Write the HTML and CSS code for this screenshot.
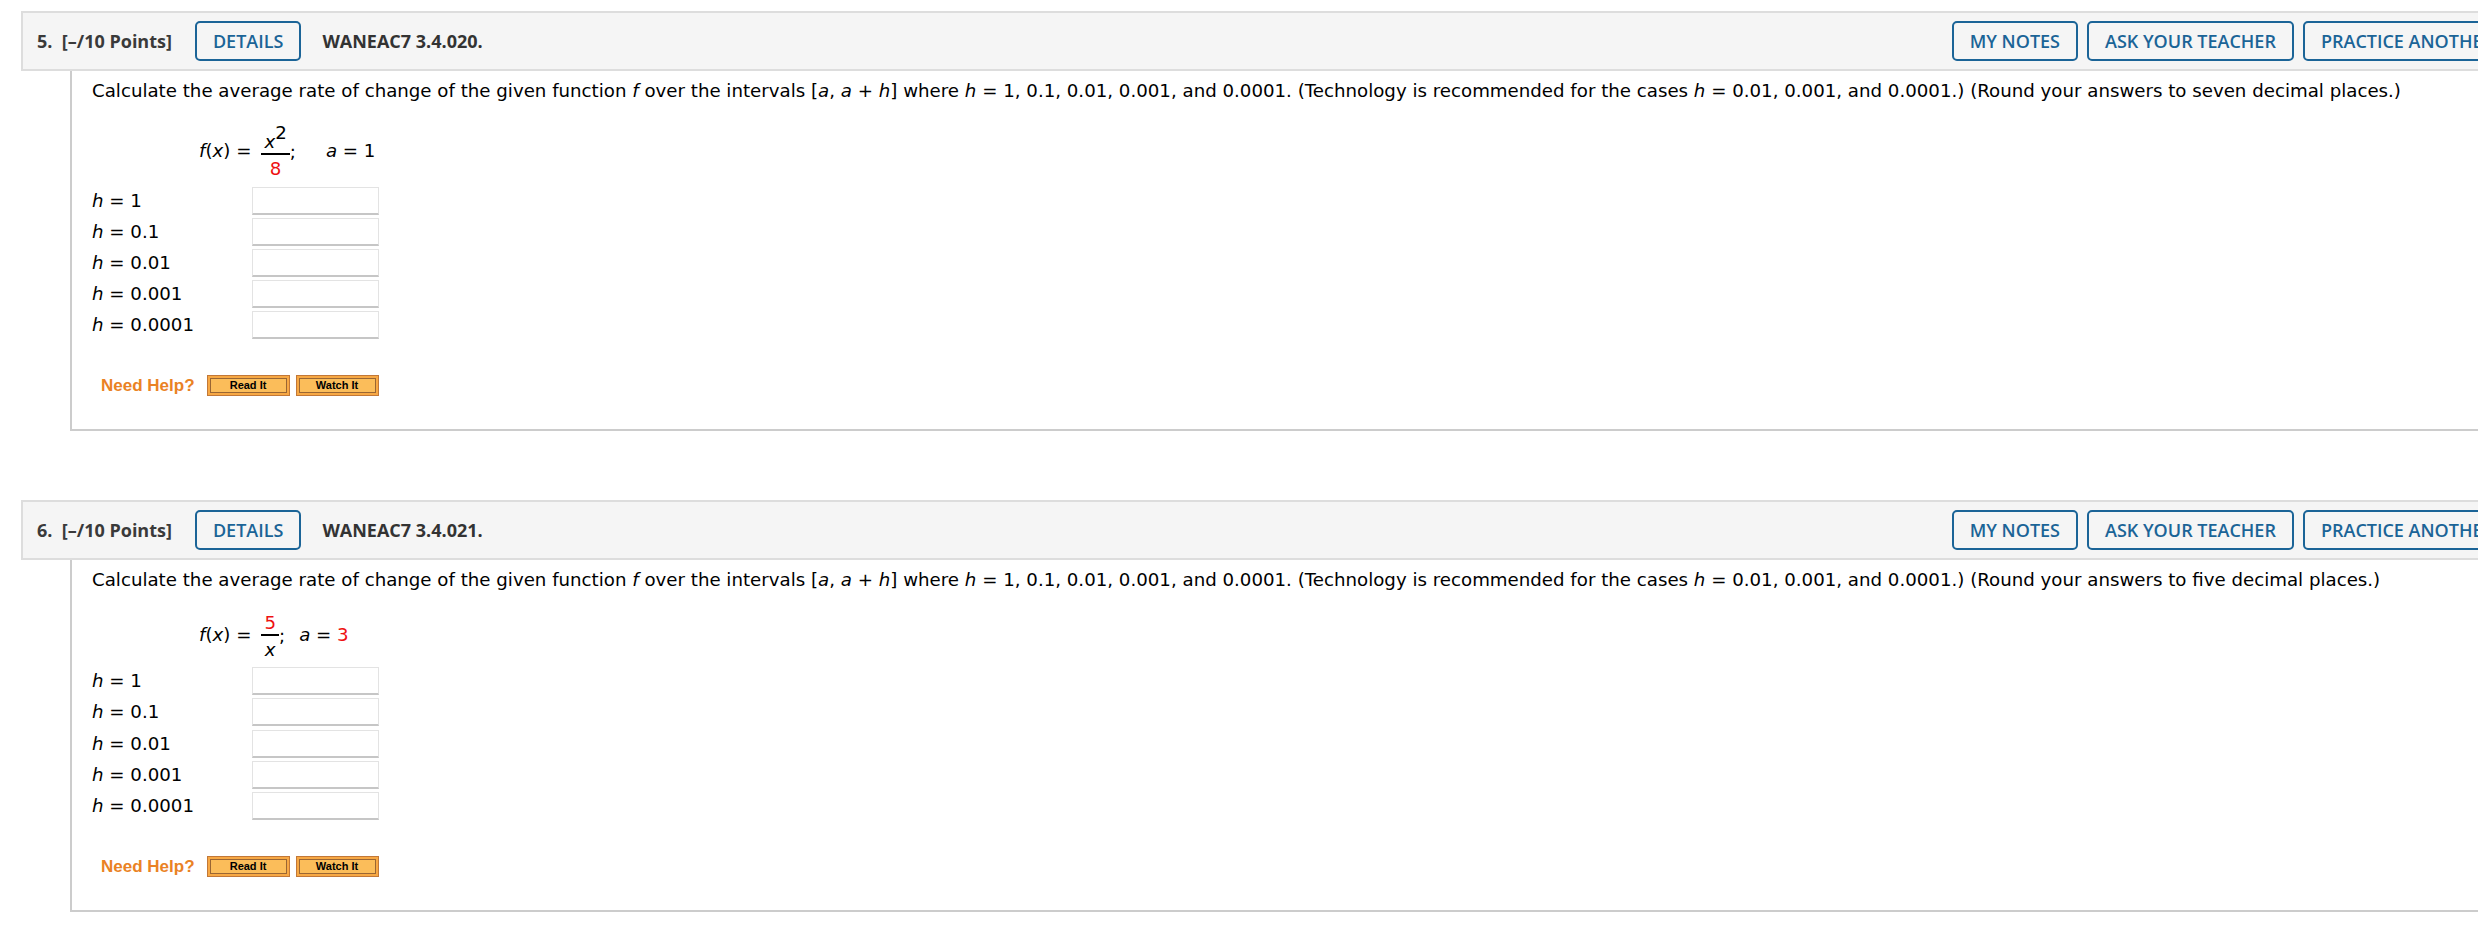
FILE: index.html
```html
<!DOCTYPE html>
<html lang="en">
<head>
<meta charset="utf-8">
<title>WebAssign</title>
<link rel="stylesheet" href="styles.css">
</head>
<body>
<div class="page">
  <section class="question">
    <div class="qhead">
      <span class="qnum">5.&nbsp; [–/10 Points]</span>
      <button class="btn details">DETAILS</button>
      <span class="qid">WANEAC7 3.4.020.</span>
      <div class="tools">
        <button class="btn">MY NOTES</button>
        <button class="btn">ASK YOUR TEACHER</button>
        <button class="btn">PRACTICE ANOTHER</button>
      </div>
    </div>
    <div class="qbody">
      <p class="prompt">Calculate the average rate of change of the given function <i>f</i> over the intervals [<i>a</i>, <i>a</i> + <i>h</i>] where <i>h</i> = 1, 0.1, 0.01, 0.001, and 0.0001. (Technology is recommended for the cases <i>h</i> = 0.01, 0.001, and 0.0001.) (Round your answers to seven decimal places.)</p>
      <div class="formula">
        <span class="fx"><i>f</i>(<i>x</i>) =</span>
        <span class="frac"><span class="num tall"><i>x</i><sup>2</sup></span><span class="den red">8</span></span>
        <span class="semi">;</span>
        <span class="aval wide"><i>a</i> = 1</span>
      </div>
      <div class="answers">
        <span class="lbl"><i>h</i> = 1</span><span class="box"></span>
        <span class="lbl"><i>h</i> = 0.1</span><span class="box"></span>
        <span class="lbl"><i>h</i> = 0.01</span><span class="box"></span>
        <span class="lbl"><i>h</i> = 0.001</span><span class="box"></span>
        <span class="lbl"><i>h</i> = 0.0001</span><span class="box"></span>
      </div>
      <div class="help">
        <span class="need">Need Help?</span>
        <span class="hbtn"><span>Read It</span></span>
        <span class="hbtn"><span>Watch It</span></span>
      </div>
    </div>
  </section>

  <section class="question">
    <div class="qhead">
      <span class="qnum">6.&nbsp; [–/10 Points]</span>
      <button class="btn details">DETAILS</button>
      <span class="qid">WANEAC7 3.4.021.</span>
      <div class="tools">
        <button class="btn">MY NOTES</button>
        <button class="btn">ASK YOUR TEACHER</button>
        <button class="btn">PRACTICE ANOTHER</button>
      </div>
    </div>
    <div class="qbody">
      <p class="prompt">Calculate the average rate of change of the given function <i>f</i> over the intervals [<i>a</i>, <i>a</i> + <i>h</i>] where <i>h</i> = 1, 0.1, 0.01, 0.001, and 0.0001. (Technology is recommended for the cases <i>h</i> = 0.01, 0.001, and 0.0001.) (Round your answers to five decimal places.)</p>
      <div class="formula">
        <span class="fx"><i>f</i>(<i>x</i>) =</span>
        <span class="frac"><span class="num red">5</span><span class="den"><i>x</i></span></span>
        <span class="semi">;</span>
        <span class="aval"><i>a</i> = <span class="red">3</span></span>
      </div>
      <div class="answers">
        <span class="lbl"><i>h</i> = 1</span><span class="box"></span>
        <span class="lbl"><i>h</i> = 0.1</span><span class="box"></span>
        <span class="lbl"><i>h</i> = 0.01</span><span class="box"></span>
        <span class="lbl"><i>h</i> = 0.001</span><span class="box"></span>
        <span class="lbl"><i>h</i> = 0.0001</span><span class="box"></span>
      </div>
      <div class="help">
        <span class="need">Need Help?</span>
        <span class="hbtn"><span>Read It</span></span>
        <span class="hbtn"><span>Watch It</span></span>
      </div>
    </div>
  </section>
</div>
</body>
</html>
```
FILE: styles.css
```css
* { box-sizing: border-box; }
html, body { margin: 0; padding: 0; overflow: hidden; background: #fff; }
body {
  font-family: "DejaVu Sans", Verdana, sans-serif;
  font-size: 18.2px;
  color: #000;
}
.page {
  display: flex;
  flex-direction: column;
  gap: 69px;
  padding: 11px 0 0 21px;
}
.question { width: 2510px; flex: none; }

.qhead {
  display: flex;
  align-items: center;
  height: 60px;
  padding: 0 14px;
  background: #f5f5f5;
  border: 2px solid #dddddd;
  font-family: "Open Sans", sans-serif;
  font-size: 18px;
  color: #3a3a3a;
}
.qnum { font-weight: 700; white-space: pre; }
.qid { font-weight: 700; margin-left: 21px; color: #333; }
.btn {
  height: 40px;
  padding: 0 16px;
  border: 2px solid #1b6497;
  border-radius: 5px;
  background: transparent;
  color: #1b6497;
  font-family: "Open Sans", sans-serif;
  font-weight: 600;
  font-size: 18px;
  line-height: 1;
  white-space: nowrap;
}
.details { margin-left: 23px; }
.tools { margin-left: auto; margin-right: 3px; display: flex; gap: 9px; }

.qbody {
  margin-left: 49px;
  border-left: 2px solid #cccccc;
  border-bottom: 2px solid #cccccc;
  padding: 10px 0 32.5px 20px;
}
.prompt { margin: 0; line-height: 20px; white-space: nowrap; }

.formula {
  display: flex;
  align-items: center;
  margin: 19px 0 6.5px 107px;
}
.frac {
  display: inline-flex;
  flex-direction: column;
  align-items: center;
  margin-left: 10px;
}
.num {
  line-height: 22px;
  padding: 3px 3px 0;
  border-bottom: 2px solid #000;
}
.num.tall { padding-top: 11px; }
.num sup { font-size: 1em; line-height: 0; vertical-align: 9px; }
.den { line-height: 22px; padding-top: 3px; }
.semi { align-self: center; margin-top: 2px; }
.aval { margin-left: 14px; }
.aval.wide { margin-left: 30px; }
.red { color: #ee1111; }

.answers {
  display: grid;
  grid-template-columns: 160px 127px;
  grid-auto-rows: 28px;
  row-gap: 3.2px;
}
.lbl { line-height: 28px; }
.box {
  background: #fff;
  border: 1px solid #e3e3e3;
  border-bottom: 2px solid #c6c6c6;
}

.help {
  display: flex;
  align-items: center;
  margin-top: 36px;
  padding-left: 9px;
  height: 21px;
}
.need {
  font-family: "Liberation Sans", Arial, sans-serif;
  font-weight: 700;
  font-size: 17px;
  color: #ea8224;
  margin-right: 12px;
}
.hbtn {
  width: 83px;
  height: 21px;
  padding: 2px;
  border: 1px solid #c27838;
  background: #f7a844;
  margin-right: 6px;
}
.hbtn span {
  display: block;
  height: 100%;
  border: 1px solid #9a6633;
  background: #fbbd5a;
  font-family: "Liberation Sans", Arial, sans-serif;
  font-weight: 700;
  font-size: 11px;
  line-height: 13px;
  text-align: center;
  color: #000;
}
```
